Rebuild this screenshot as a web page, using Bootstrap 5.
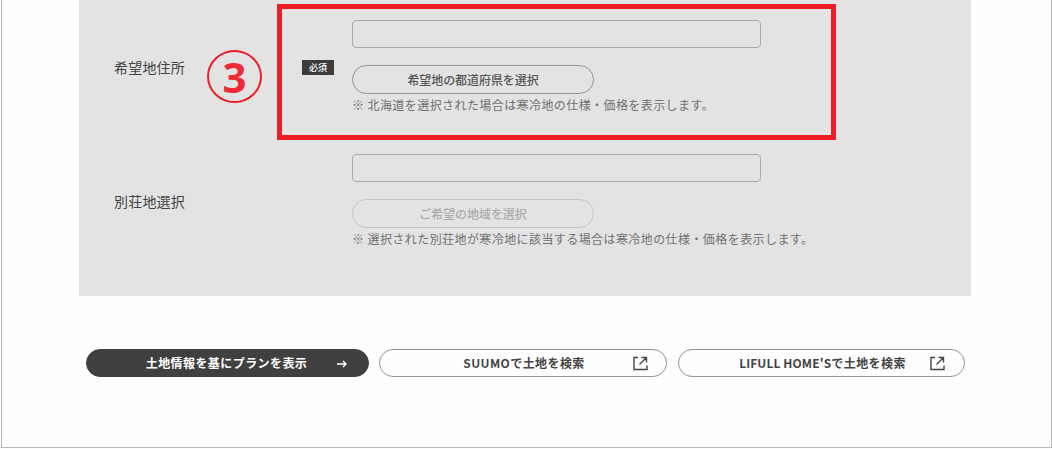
<!DOCTYPE html>
<html lang="ja">
<head>
<meta charset="utf-8">
<title>希望地住所</title>
<link rel="stylesheet" href="https://cdn.jsdelivr.net/npm/bootstrap@5.3.0/dist/css/bootstrap.min.css">
<style>
html,body{height:449px;overflow:hidden;background:#fefefe}
body{font-family:"Noto Sans CJK JP","Noto Sans",sans-serif;color:#3f3f3f}
.page-frame{position:relative;margin-left:1px;width:1051px;height:448px;border:solid #b9b9b9;border-width:0 1px 1px 1px}
.gray-panel{margin-left:77px;width:892px;height:296px;background:#e3e3e3;padding:20px 0 0 35px}
.form-line{height:134px}
.line-label{width:188px;font-size:14px;line-height:20px;letter-spacing:.2px;color:#444;flex:none}
.req-badge{width:32px;height:15px;flex:none;margin-right:18px;background:#3c3c3c;color:#fff;font-size:9px;font-weight:500;line-height:15px;text-align:center;border-radius:0;padding:0}
.req-badge-on{margin-top:40px}
.field-col{width:500px;flex:none}
.plain-input{display:block;width:409px;height:28px;background:#e3e3e3;border:1px solid #ababab;border-radius:4px;padding:0}
.plain-input:focus{background:#e3e3e3;border-color:#ababab;box-shadow:none}
.pill-select{display:block;width:242px;height:29px;margin-top:17px;padding:0;background:#e3e3e3;border:1px solid #949494;border-radius:15px;font-size:12px;font-weight:500;line-height:27px;letter-spacing:-.08px;color:#555}
.pill-select:disabled{background:#e3e3e3;border:1px solid #c6c6c6;color:#ababab;opacity:1}
.note-text{margin:2px 0 0;font-size:12px;line-height:18px;letter-spacing:.42px;color:#717171;white-space:nowrap}
.action-row{margin:53px 0 0 84px;width:880px}
.action-pill{flex:none;height:28px;padding:0;border-radius:14px;font-size:12px;font-weight:700;line-height:26px;color:#444;background:#fefefe;border:1px solid #949494;position:relative;letter-spacing:.42px}
.action-pill.dark-pill{background:#404040;border-color:#404040;color:#fff;width:283px}
.pill-b{width:288px;margin-left:10px;padding-left:2px}
.pill-c{width:287px;margin-left:11px;padding-left:2px}
.action-pill svg{position:absolute;top:6px}
.action-pill svg.arrow-mark{right:20px;top:9px}
.action-pill svg.ext-b{right:18px}
.action-pill svg.ext-c{right:19px}
.latin-part{letter-spacing:.1px}
.pill-a-label{position:relative;left:-1px}
.red-frame{position:absolute;left:275px;top:4px;width:559px;height:136px;border:5px solid #ee1c25}
.red-num{position:absolute;left:205px;top:50px;width:55px;height:53px;border:2px solid #ee1c25;border-radius:50%;color:#ee2a36;font-family:"Open Sans",sans-serif;font-weight:700;font-size:42px;line-height:49px;text-align:center}
</style>
</head>
<body>
<div class="page-frame">
  <div class="gray-panel">
    <div class="form-line d-flex">
      <div class="line-label d-flex align-items-center pb-4 mb-3"><span>希望地住所</span></div>
      <div class="d-flex align-items-start">
        <span class="req-badge req-badge-on badge">必須</span>
        <div class="field-col">
          <input class="plain-input form-control" type="text" aria-label="希望地住所">
          <button class="pill-select btn" type="button">希望地の都道府県を選択</button>
          <p class="note-text">※ 北海道を選択された場合は寒冷地の仕様・価格を表示します。</p>
        </div>
      </div>
    </div>
    <div class="form-line d-flex">
      <div class="line-label d-flex align-items-center pb-4 mb-3"><span>別荘地選択</span></div>
      <div class="d-flex align-items-start">
        <span class="req-badge invisible" aria-hidden="true"></span>
        <div class="field-col">
          <input class="plain-input form-control" type="text" aria-label="別荘地選択">
          <button class="pill-select btn" type="button" disabled>ご希望の地域を選択</button>
          <p class="note-text">※ 選択された別荘地が寒冷地に該当する場合は寒冷地の仕様・価格を表示します。</p>
        </div>
      </div>
    </div>
  </div>
  <div class="action-row d-flex">
    <button class="action-pill dark-pill btn" type="button"><span class="pill-a-label">土地情報を基にプランを表示</span>
      <svg class="arrow-mark" width="12" height="10" viewBox="0 0 12 10" fill="none" stroke="#fff" stroke-width="1.4"><path d="M1 5h9M7 2l3 3-3 3"/></svg>
    </button>
    <button class="action-pill pill-b btn" type="button">SUUMOで土地を検索
      <svg class="ext-b" width="15" height="15" viewBox="0 0 15 15" fill="none" stroke="#444" stroke-width="1.4"><path d="M5 1.5H1v12h13v-4M6.5 8.5 13 2M8.5 1.5h5v5"/></svg>
    </button>
    <button class="action-pill pill-c btn" type="button"><span class="latin-part">LIFULL HOME'S</span>で土地を検索
      <svg class="ext-c" width="15" height="15" viewBox="0 0 15 15" fill="none" stroke="#444" stroke-width="1.4"><path d="M5 1.5H1v12h13v-4M6.5 8.5 13 2M8.5 1.5h5v5"/></svg>
    </button>
  </div>
  <div class="red-frame"></div>
  <div class="red-num">3</div>
</div>
<script src="https://cdn.jsdelivr.net/npm/bootstrap@5.3.0/dist/js/bootstrap.bundle.min.js"></script>
</body>
</html>
